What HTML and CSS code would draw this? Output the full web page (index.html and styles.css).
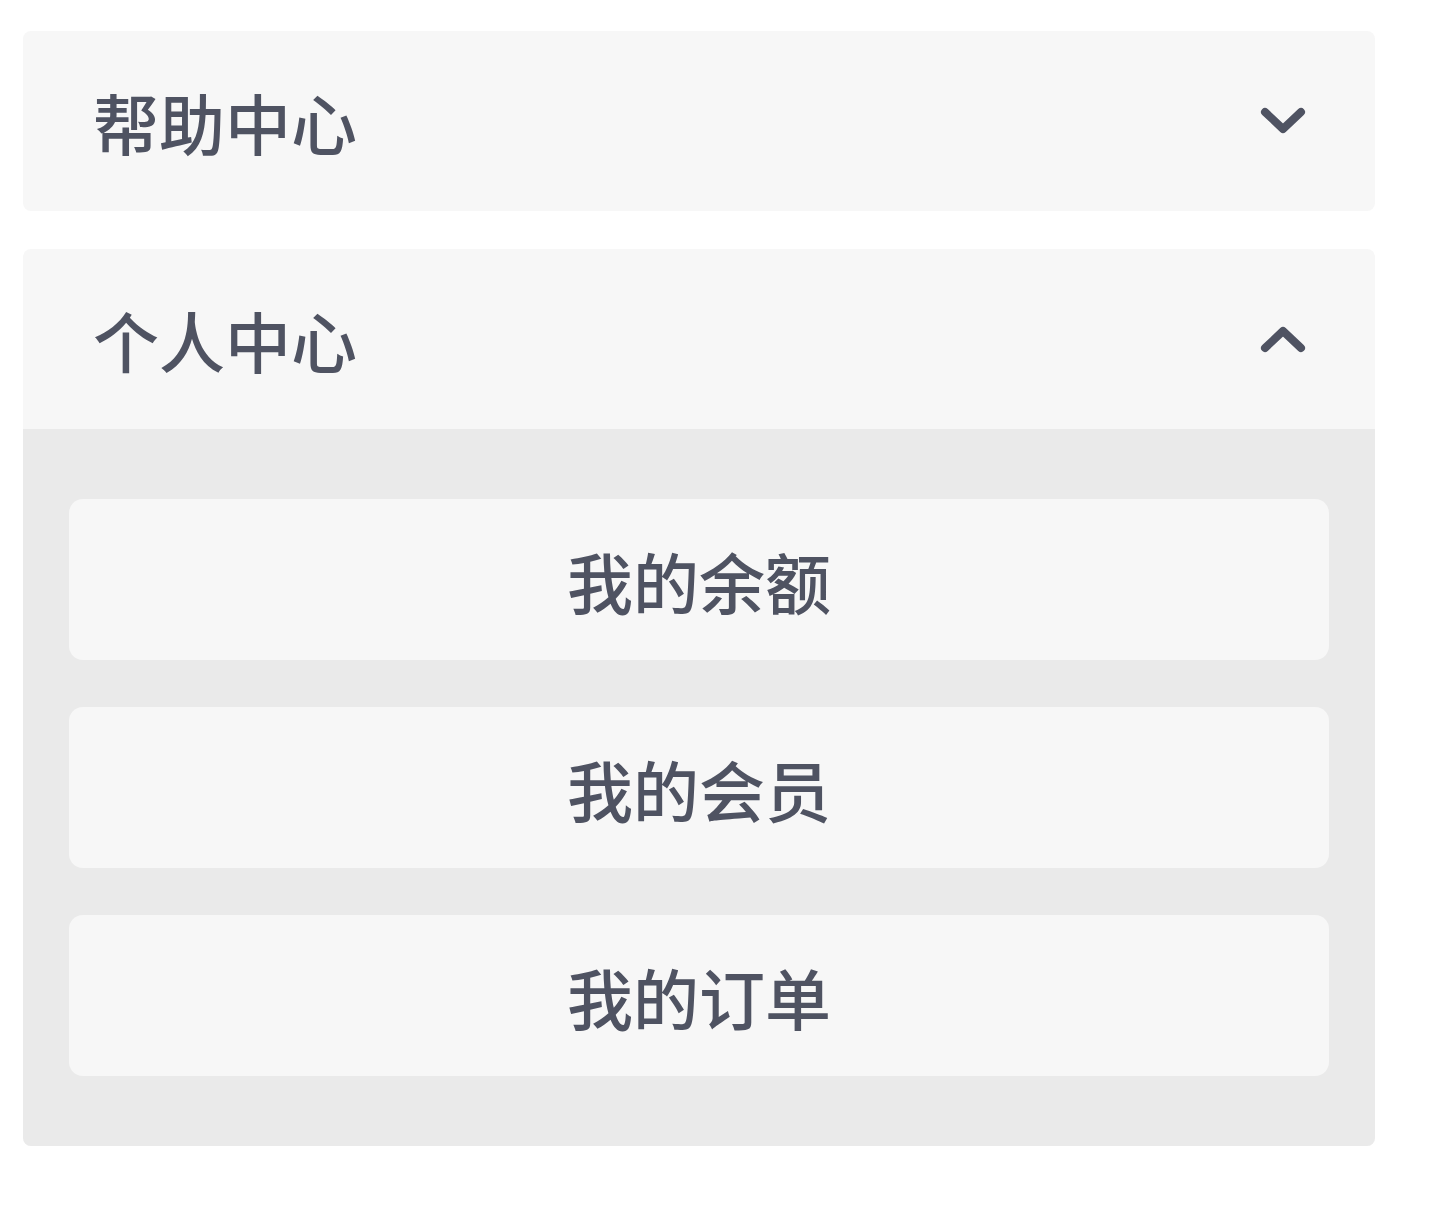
FILE: index.html
```html
<!DOCTYPE html>
<html lang="zh">
<head>
<meta charset="utf-8">
<link rel="stylesheet" href="styles.css">
</head>
<body>
<div class="page">
  <div class="panel">
    <div class="head">
      <span class="title">帮助中心</span>
      <svg class="chev" width="46" height="30" viewBox="0 0 46 30"><path d="M5 6 L23 23 L41 6" fill="none" stroke="#4f5362" stroke-width="8" stroke-linecap="round" stroke-linejoin="round"/></svg>
    </div>
  </div>
  <div class="panel open">
    <div class="head">
      <span class="title">个人中心</span>
      <svg class="chev" width="46" height="30" viewBox="0 0 46 30"><path d="M5 24 L23 7 L41 24" fill="none" stroke="#4f5362" stroke-width="8" stroke-linecap="round" stroke-linejoin="round"/></svg>
    </div>
    <div class="body">
      <div class="item">我的余额</div>
      <div class="item">我的会员</div>
      <div class="item">我的订单</div>
    </div>
  </div>
</div>
</body>
</html>
```
FILE: styles.css
```css
html, body {
  margin: 0;
  padding: 0;
  background: #ffffff;
}
.page {
  padding: 31px 0 0 23px;
  width: 1352px;
  display: flex;
  flex-direction: column;
  gap: 38px;
  font-family: "Noto Sans CJK SC", "Noto Sans", sans-serif;
  color: #4f5362;
}
.panel {
  background: #f7f7f7;
  border-radius: 8px;
  overflow: hidden;
}
.head {
  height: 180px;
  display: flex;
  align-items: center;
  justify-content: space-between;
  padding: 0 69px 0 70px;
}
.title {
  font-size: 66px;
  font-weight: 500;
  line-height: 1;
}
.chev {
  display: block;
}
.body {
  background: #eaeaea;
  padding: 70px 46px 70px;
  display: flex;
  flex-direction: column;
  gap: 47px;
}
.item {
  height: 161px;
  background: #f7f7f7;
  border-radius: 14px;
  display: flex;
  align-items: center;
  justify-content: center;
  font-size: 66px;
  font-weight: 500;
  line-height: 1;
}
```
